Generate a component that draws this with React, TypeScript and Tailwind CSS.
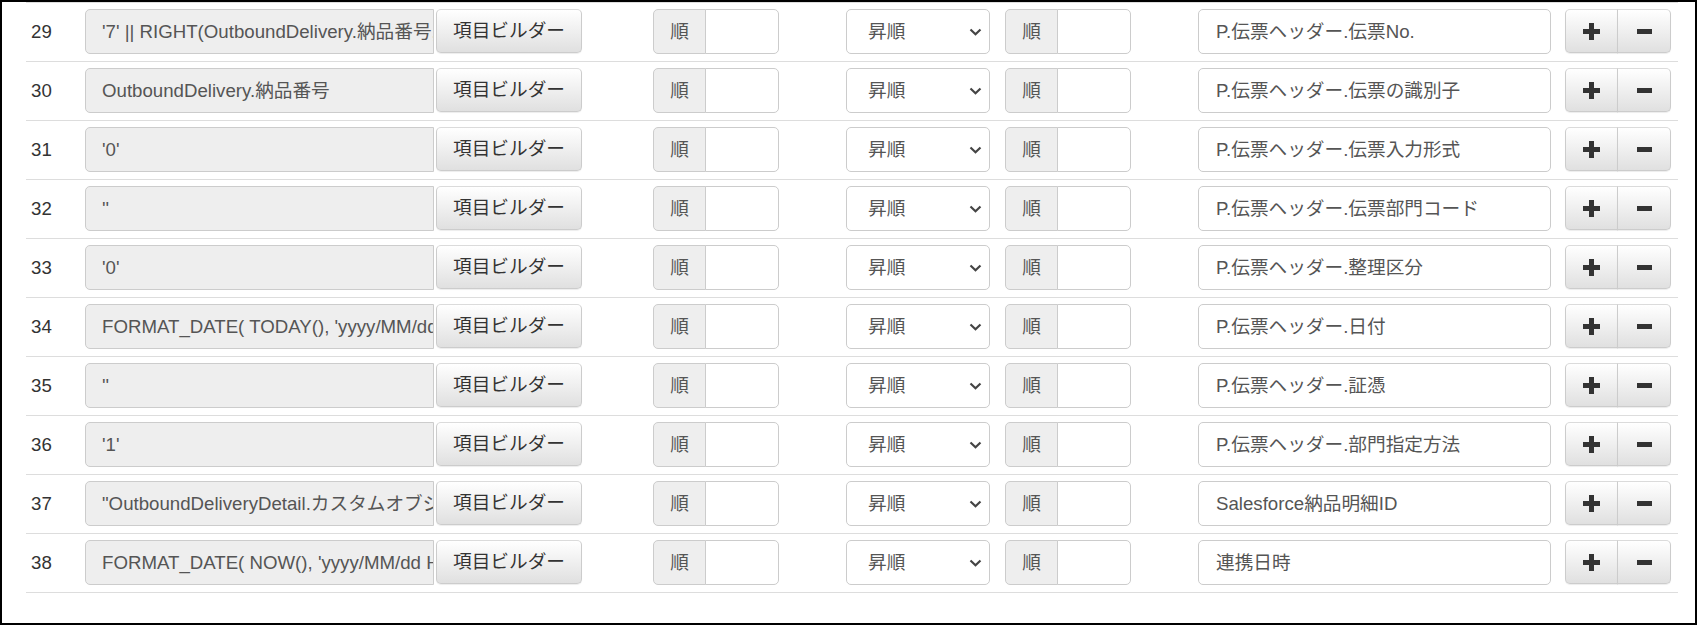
import React from "react";

const rows = [
  { n: 29, expr: "'7' || RIGHT(OutboundDelivery.納品番号, 9)", target: "P.伝票ヘッダー.伝票No." },
  { n: 30, expr: "OutboundDelivery.納品番号", target: "P.伝票ヘッダー.伝票の識別子" },
  { n: 31, expr: "'0'", target: "P.伝票ヘッダー.伝票入力形式" },
  { n: 32, expr: "''", target: "P.伝票ヘッダー.伝票部門コード" },
  { n: 33, expr: "'0'", target: "P.伝票ヘッダー.整理区分" },
  { n: 34, expr: "FORMAT_DATE( TODAY(), 'yyyy/MM/dd')", target: "P.伝票ヘッダー.日付" },
  { n: 35, expr: "''", target: "P.伝票ヘッダー.証憑" },
  { n: 36, expr: "'1'", target: "P.伝票ヘッダー.部門指定方法" },
  { n: 37, expr: "\"OutboundDeliveryDetail.カスタムオブジェクト\"", target: "Salesforce納品明細ID" },
  { n: 38, expr: "FORMAT_DATE( NOW(), 'yyyy/MM/dd HH:mm:ss')", target: "連携日時" },
];

const font = { fontFamily: '"Liberation Sans", Arial, "Noto Sans CJK JP", sans-serif' };

const btn =
  "flex items-center justify-center h-[44px] border border-[#ccc] border-t-[#dbdbdb] bg-linear-to-b from-white to-[#e0e0e0] shadow-[inset_0_1px_0_rgba(255,255,255,0.15),0_1px_1px_rgba(0,0,0,0.075)] text-[#333]";

function AddonGroup() {
  return (
    <div className="flex h-[45px] w-[127px]">
      <div className="flex w-[53px] items-center justify-center rounded-l-[5px] border border-[#ccc] bg-[#eee] text-[#555]">
        順
      </div>
      <div className="w-[74px] -ml-px rounded-r-[5px] border border-[#ccc] bg-white" />
    </div>
  );
}

function Row({ n, expr, target }: { n: number; expr: string; target: string }) {
  return (
    <div className="flex items-start border-t border-[#ddd] pt-[6px] pb-[7px]">
      <div className="flex h-[45px] w-[59px] items-center pl-[5px] text-[#333]">{n}</div>
      <div className="flex h-[45px] w-[349px] items-center overflow-hidden whitespace-nowrap rounded-l-[5px] border border-[#ccc] bg-[#eee] pl-[16px] text-[#555]">
        {expr}
      </div>
      <div className={`${btn} ml-[2px] w-[146px] rounded-[5px]`}>項目ビルダー</div>
      <div className="ml-[71px]">
        <AddonGroup />
      </div>
      <div className="ml-[66px] flex h-[45px] w-[144px] items-center justify-between rounded-[5px] border border-[#ccc] bg-white pl-[21px] pr-[7px] text-[#555]">
        <span>昇順</span>
        <svg width="13" height="8" viewBox="0 0 13 8" className="mt-[1px]">
          <path d="M1.5 1.5 L6.5 6.2 L11.5 1.5" fill="none" stroke="#444" strokeWidth="2.2" />
        </svg>
      </div>
      <div className="ml-[15px]">
        <AddonGroup />
      </div>
      <div className="ml-[66px] flex h-[45px] w-[353px] items-center overflow-hidden whitespace-nowrap rounded-[5px] border border-[#ccc] bg-white pl-[17px] text-[#555]">
        {target}
      </div>
      <div className="ml-[14px] flex">
        <div className={`${btn} w-[53px] rounded-l-[5px]`}>
          <svg width="17" height="17" viewBox="0 0 17 17">
            <rect x="6" y="0" width="5" height="17" fill="#333" />
            <rect x="0" y="6" width="17" height="5" fill="#333" />
          </svg>
        </div>
        <div className={`${btn} -ml-px w-[54px] rounded-r-[5px]`}>
          <svg width="15" height="5" viewBox="0 0 15 5">
            <rect x="0" y="0" width="15" height="5" fill="#333" />
          </svg>
        </div>
      </div>
    </div>
  );
}

export default function App() {
  return (
    <div className="h-[625px] w-[1697px] border-2 border-black bg-white text-[18.67px]" style={font}>
      <div className="ml-[24px] w-[1652px] border-b border-[#ddd]">
        {rows.map((r) => (
          <Row key={r.n} {...r} />
        ))}
      </div>
    </div>
  );
}
